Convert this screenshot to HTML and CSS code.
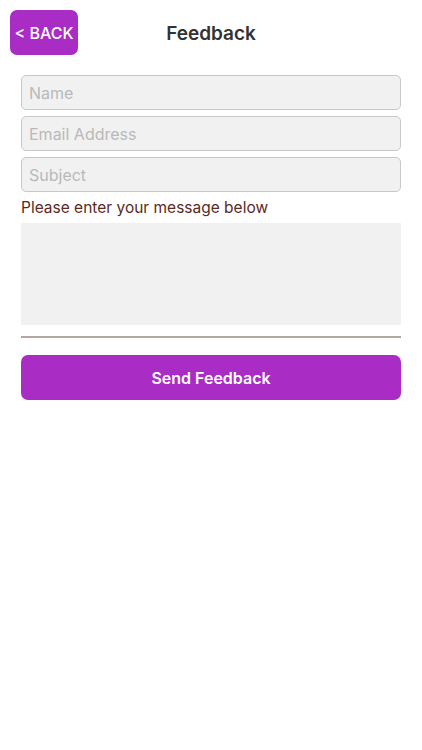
FILE: index.html
```html
<!DOCTYPE html>
<html lang="en">
<head>
  <meta charset="UTF-8">
  <meta name="viewport" content="width=device-width, initial-scale=1.0">
  <title>Feedback</title>
  <link rel="stylesheet" href="styles.css">
</head>
<body>

  <div class="header">
    <button class="back-btn" type="button">&lt; BACK</button>
    <h1>Feedback</h1>
  </div>

  <form class="feedback-form" id="feedbackForm">
    <input type="text" class="field" placeholder="Name">
    <input type="text" class="field" placeholder="Email Address">
    <input type="text" class="field" placeholder="Subject">

    <label class="message-label" for="message">Please enter your message below</label>
    <textarea id="message" class="message"></textarea>

    <div class="divider"></div>

    <button type="submit" class="send-btn">Send Feedback</button>
  </form>

</body>
</html>
```

FILE: styles.css
```css
body {
  margin: 0;
  font-family: Inter, "Liberation Sans", Arial, sans-serif;
  background: #fff;
}
.header {
  position: relative;
  height: 66px;
  display: flex;
  align-items: center;
  justify-content: center;
}
.header h1 {
  margin: 0;
  font-size: 19px;
  font-weight: 600;
  color: #333;
}
.back-btn {
  position: absolute;
  left: 10px;
  top: 10px;
  width: 68px;
  height: 45px;
  padding: 0;
  border: none;
  border-radius: 7px;
  background-color: #a92cc4;
  color: #fff;
  font-family: inherit;
  font-size: 16px;
  font-weight: 500;
}
.feedback-form {
  display: flex;
  flex-direction: column;
  padding: 9px 21px 0;
}
.field {
  box-sizing: border-box;
  height: 35px;
  margin-bottom: 6px;
  padding: 0 7px;
  border: 1px solid #c8c8c8;
  border-radius: 5px;
  background-color: #f1f1f1;
  font-family: inherit;
  font-size: 16px;
  color: #333;
}
.field::placeholder {
  color: #b9b9b9;
}
.message-label {
  font-size: 15.5px;
  color: #5b2a22;
  line-height: 20px;
}
.message {
  box-sizing: border-box;
  height: 102px;
  margin-top: 5px;
  border: none;
  background-color: #f1f1f1;
  resize: none;
}
.divider {
  height: 2px;
  margin-top: 11px;
  background-color: #b5a5a1;
}
.send-btn {
  height: 45px;
  margin-top: 17px;
  border: none;
  border-radius: 7px;
  background-color: #a92cc4;
  color: #fff;
  font-family: inherit;
  font-size: 16px;
  font-weight: 600;
}
```
